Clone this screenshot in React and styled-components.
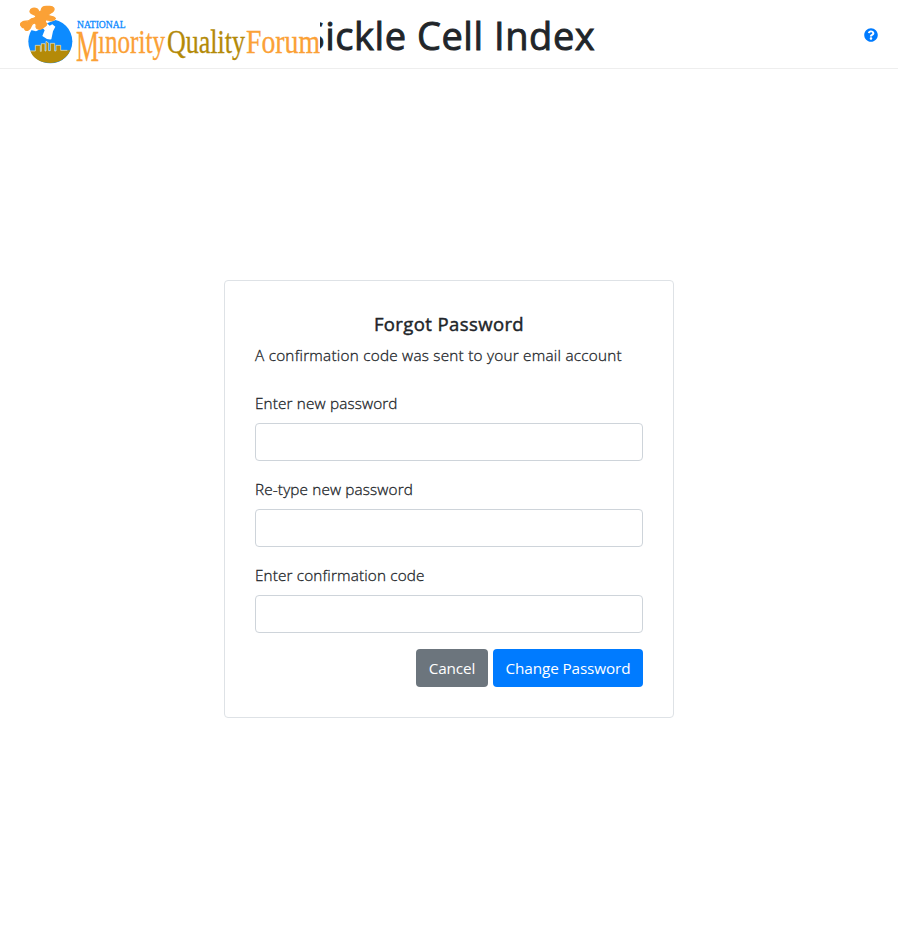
import React from "react";
import styled, { createGlobalStyle } from "styled-components";

const GlobalStyle = createGlobalStyle`
  *, *::before, *::after { box-sizing: border-box; }
  body {
    margin: 0;
    background: #fff;
    color: #212529;
    font-family: "Open Sans", "Noto Sans", sans-serif;
    font-size: 16px;
    line-height: 24px;
  }
`;

const Page = styled.div`
  display: flex;
  flex-direction: column;
  height: 928px;
  overflow: hidden;
`;

const Header = styled.header`
  display: grid;
  grid-template-columns: 300px 1fr 14px;
  align-items: center;
  height: 69px;
  padding: 0 20px;
  border-bottom: 1px solid #eee;
`;

const Logo = styled.svg`
  grid-area: 1 / 1;
  z-index: 1;
  display: block;
  width: 300px;
  height: 68px;
  background: #fff;
  font-family: "Liberation Serif", serif;
`;

const Title = styled.h1`
  grid-area: 1 / 1 / 2 / -1;
  margin: 0;
  padding: 2px 0 0 1px;
  text-align: center;
  font-size: 38px;
  line-height: 48px;
  font-weight: 500;
  letter-spacing: 0.55px;
  -webkit-text-stroke: 0.9px #212529;
`;

const HelpLink = styled.a`
  grid-area: 1 / 3;
  z-index: 1;
  display: flex;
  padding-top: 2px;
`;

const Main = styled.main`
  flex: 1;
  display: flex;
  justify-content: center;
  align-items: flex-start;
  padding-top: 211px;
`;

const Card = styled.form`
  width: 450px;
  height: 438px;
  padding: 30px;
  border: 1px solid #dee2e6;
  border-radius: 4px;
`;

const Heading = styled.h2`
  margin: 0 0 7px;
  padding-top: 1px;
  text-align: center;
  font-size: 18.5px;
  line-height: 24px;
  font-weight: 500;
  letter-spacing: 0.4px;
  -webkit-text-stroke: 0.45px #212529;
`;

const Notice = styled.p`
  margin: 0 0 24px;
  font-weight: 300;
  font-size: 15.3px;
  white-space: nowrap;
  letter-spacing: 0.24px;
  -webkit-text-stroke: 0.3px #212529;
`;

const Field = styled.label`
  display: block;
  margin-bottom: 16px;
`;

const FieldLabel = styled.span`
  display: block;
  width: max-content;
  margin-bottom: 8px;
  font-size: 15.3px;
  font-weight: 300;
  letter-spacing: 0.15px;
  -webkit-text-stroke: 0.3px #212529;
`;

const Input = styled.input`
  display: block;
  width: 100%;
  height: 38px;
  padding: 6px 12px;
  border: 1px solid #ced4da;
  border-radius: 4px;
  background: #fff;
  font: inherit;
`;

const Actions = styled.div`
  display: flex;
  justify-content: flex-end;
  gap: 5px;
`;

const Button = styled.button`
  width: ${(p) => p.$width}px;
  height: 38px;
  padding: 0;
  border: 0;
  border-radius: 4px;
  background: ${(p) => (p.$primary ? "#007bff" : "#6c757d")};
  color: #fff;
  font: inherit;
  font-size: 15.3px;
  letter-spacing: -0.12px;
  white-space: nowrap;
`;

const ORANGE = "#fba136";
const BLUE = "#0d8bff";
const GOLD = "#b48a08";

function ForumLogo() {
  return (
    <Logo viewBox="20 0 300 68" role="img" aria-label="National Minority Quality Forum">
      <g transform="translate(10 0) scale(.33333)">
        <circle cx="121" cy="124" r="66" fill={BLUE} />
        <path
          fill={GOLD}
          d="M61 152H76V136H92V153H93V131H105V153H108V125L115 129V152H121V130H134V153H138V136H153V151H181C171 174 149 189 122 189C92 189 68 175 61 152Z"
        />
        <path
          fill="none"
          stroke="#f5edcf"
          strokeWidth="2"
          d="M62 153H76V136H91V154H94V131H105V153H108V124L116 129V152H121V130H134V153H138V136H152V151H172"
        />
        <path fill="#fff" d="M54 88L78 94L98 84L104 91L97 108Q111 120 124 118L129 94L136 80L127 73L119 77L111 70L137 60L118 52L70 60Z" />
        <path
          fill={ORANGE}
          stroke={ORANGE}
          strokeWidth="4"
          strokeLinejoin="round"
          d="M60 34C61 24 73 22 82 27C86 30 84 36 90 36C96 35 92 26 98 22C104 17 113 21 120 19C130 19 135 26 130 33C126 40 117 38 115 46C120 51 130 47 136 55C132 63 122 64 114 60C105 57 103 64 110 71C111 79 102 79 97 85C91 90 79 88 78 81C80 73 77 67 70 70C61 74 65 84 56 89C49 94 43 90 44 84C31 82 28 71 37 66C45 61 54 67 61 59C67 53 78 57 78 49C76 42 61 44 60 34Z"
        />
      </g>
      <text x="77" y="28" fontSize="10.5" fill={BLUE} stroke={BLUE} strokeWidth=".3" textLength="48.5" lengthAdjust="spacingAndGlyphs">NATIONAL</text>
      <g fill={ORANGE} stroke={ORANGE} strokeWidth=".3">
        <text x="76" y="61" fontSize="45" textLength="23" lengthAdjust="spacingAndGlyphs">M</text>
        <text x="98" y="53" fontSize="33" textLength="67" lengthAdjust="spacingAndGlyphs">ınority</text>
        <text x="246" y="52.5" fontSize="33.5" textLength="74" lengthAdjust="spacingAndGlyphs">Forum</text>
      </g>
      <text x="167" y="53" fontSize="33" fill={GOLD} stroke={GOLD} strokeWidth=".3" textLength="78" lengthAdjust="spacingAndGlyphs">Quality</text>
    </Logo>
  );
}

function HelpIcon() {
  return (
    <svg width="14" height="14" viewBox="0 0 512 512" aria-label="Help">
      <path
        fill="#007bff"
        d="M504 256c0 136.997-111.043 248-248 248S8 392.997 8 256C8 119.083 119.043 8 256 8s248 111.083 248 248zM262.655 90c-54.497 0-89.255 22.957-116.549 63.758-3.536 5.286-2.353 12.415 2.715 16.258l34.699 26.31c5.205 3.947 12.621 3.008 16.665-2.122 17.864-22.658 30.113-35.797 57.303-35.797 20.429 0 45.698 13.148 45.698 32.958 0 14.976-12.363 22.667-32.534 33.976C247.128 238.528 216 254.941 216 296v4c0 6.627 5.373 12 12 12h56c6.627 0 12-5.373 12-12v-1.333c0-28.462 83.186-29.647 83.186-106.667 0-58.002-60.165-102-116.531-102zM256 338c-25.365 0-46 20.635-46 46 0 25.364 20.635 46 46 46s46-20.636 46-46c0-25.365-20.635-46-46-46z"
      />
    </svg>
  );
}

export default function App() {
  return (
    <>
      <GlobalStyle />
      <Page>
        <Header>
          <ForumLogo />
          <Title>Sickle Cell Index</Title>
          <HelpLink>
            <HelpIcon />
          </HelpLink>
        </Header>
        <Main>
          <Card>
            <Heading>Forgot Password</Heading>
            <Notice>A confirmation code was sent to your email account</Notice>
            <Field>
              <FieldLabel>Enter new password</FieldLabel>
              <Input type="password" />
            </Field>
            <Field>
              <FieldLabel>Re-type new password</FieldLabel>
              <Input type="password" />
            </Field>
            <Field>
              <FieldLabel>Enter confirmation code</FieldLabel>
              <Input />
            </Field>
            <Actions>
              <Button type="button" $width={72}>Cancel</Button>
              <Button type="button" $primary $width={150}>Change Password</Button>
            </Actions>
          </Card>
        </Main>
      </Page>
    </>
  );
}
